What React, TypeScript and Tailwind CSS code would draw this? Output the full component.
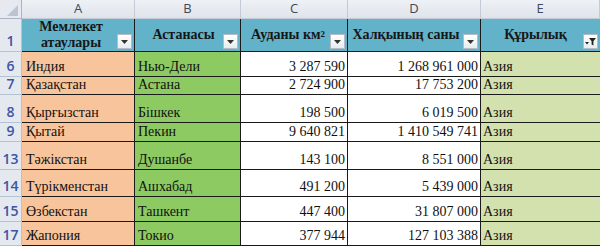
const rows = [
  { n: '6', h: 'h-[25px]', name: 'Индия', cap: 'Нью-Дели', area: '3 287 590', pop: '1 268 961 000' },
  { n: '7', h: 'h-[18px]', name: 'Қазақстан', cap: 'Астана', area: '2 724 900', pop: '17 753 200' },
  { n: '8', h: 'h-[28px]', name: 'Қырғызстан', cap: 'Бішкек', area: '198 500', pop: '6 019 500' },
  { n: '9', h: 'h-[19px]', name: 'Қытай', cap: 'Пекин', area: '9 640 821', pop: '1 410 549 741' },
  { n: '13', h: 'h-[28px]', name: 'Тәжікстан', cap: 'Душанбе', area: '143 100', pop: '8 551 000' },
  { n: '14', h: 'h-[27px]', name: 'Түрікменстан', cap: 'Ашхабад', area: '491 200', pop: '5 439 000' },
  { n: '15', h: 'h-[25px]', name: 'Өзбекстан', cap: 'Ташкент', area: '447 400', pop: '31 807 000' },
  { n: '17', h: 'h-[24px]', name: 'Жапония', cap: 'Токио', area: '377 944', pop: '127 103 388' },
];

function FilterBtn({ active = false }: { active?: boolean }) {
  return (
    <div className="absolute right-[2px] bottom-[2px] w-[15px] h-[15px] bg-gradient-to-b from-white to-[#e9ecef] border border-[#b4bcc6] flex items-center justify-center">
      {active ? (
        <svg width="13" height="11" viewBox="0 0 13 11">
          <path d="M1 6h4l-2 2.5z" fill="#222" />
          <path d="M5 2h7l-2.6 3.2v4.3l-1.8-1V5.2z" fill="#222" />
        </svg>
      ) : (
        <svg width="7" height="4" viewBox="0 0 7 4">
          <path d="M0 0h7L3.5 4z" fill="#333" />
        </svg>
      )}
    </div>
  );
}

export default function App() {
  const colHead = "flex items-center justify-center border-r border-b border-[#c3cbd6] bg-gradient-to-b from-[#eef1f5] to-[#dfe4eb] text-[#404858] text-[13px] font-['Open_Sans',sans-serif]";
  const rowHead = "flex items-end justify-center pb-[1px] border-r border-b border-[#b6c1d1] bg-[#e4e8ef] text-[#3d55a3] text-[14px] font-semibold leading-[18px] font-['Open_Sans',sans-serif]";
  const cell = "flex items-end pb-[2px] border-r border-b border-[#1a1a1a] text-[14px] leading-[15px] text-[#111] font-['Liberation_Serif',serif]";
  const head = "relative flex items-center justify-center border-r border-b border-[#1a1a1a] bg-[#62b2ca] text-[14px] font-bold leading-[16px] text-[#161616] font-['Liberation_Serif',serif]";

  return (
    <div className="w-[600px] h-[246px] overflow-hidden bg-white">
      <div className="grid grid-cols-[22px_113px_106px_107px_133px_119px]">
        <div className="h-[19px] relative border-r border-b border-[#a9b3c1] bg-[#e6eaf0]">
          <svg className="absolute left-[7px] top-[5px]" width="11" height="11" viewBox="0 0 11 11">
            <path d="M11 0v11H0z" fill="#bcc4cf" />
          </svg>
        </div>
        {['A', 'B', 'C', 'D', 'E'].map((l) => (
          <div key={l} className={`h-[19px] ${colHead}`}>{l}</div>
        ))}

        <div className={`h-[33px] ${rowHead}`}>1</div>
        <div className={`h-[33px] ${head} pr-[14px]`}>
          <span className="text-center">Мемлекет<br />атаулары</span>
          <FilterBtn />
        </div>
        <div className={`h-[33px] ${head} pr-[8px]`}>
          <span>Астанасы</span>
          <FilterBtn />
        </div>
        <div className={`h-[33px] ${head} pr-[12px]`}>
          <span>Ауданы км<sup className="text-[9px] relative -top-[2px]">2</sup></span>
          <FilterBtn />
        </div>
        <div className={`h-[33px] ${head} pr-[16px]`}>
          <span>Халқының саны</span>
          <FilterBtn />
        </div>
        <div className={`h-[33px] ${head} pr-[10px] !border-r-0`}>
          <span>Құрылық</span>
          <FilterBtn active />
        </div>

        {rows.map((r) => (
          <div key={r.n} className="contents">
            <div className={`${r.h} ${rowHead}`}>{r.n}</div>
            <div className={`${r.h} ${cell} bg-[#f8c49c] pl-[4px]`}>{r.name}</div>
            <div className={`${r.h} ${cell} bg-[#8dca62] pl-[3px]`}>{r.cap}</div>
            <div className={`${r.h} ${cell} justify-end pr-[2px]`}>{r.area}</div>
            <div className={`${r.h} ${cell} justify-end pr-[2px]`}>{r.pop}</div>
            <div className={`${r.h} ${cell} bg-[#d3e1ae] pl-[2px] border-r-0`}>Азия</div>
          </div>
        ))}
      </div>
    </div>
  );
}
